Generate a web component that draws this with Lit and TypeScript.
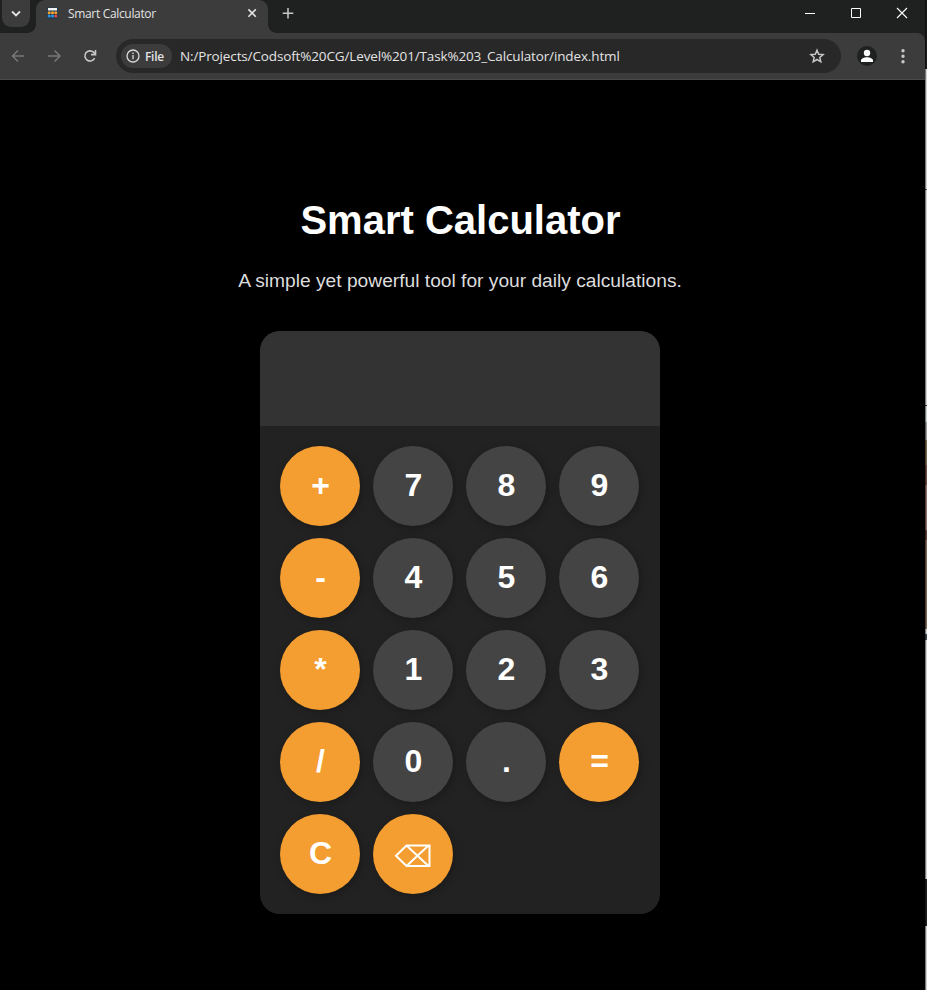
import { LitElement, html, css, svg } from "lit";
import { customElement } from "lit/decorators.js";

const KEYS = ["+", "7", "8", "9", "-", "4", "5", "6", "*", "1", "2", "3", "/", "0", ".", "=", "C", "⌫"];

@customElement("browser-chrome")
class BrowserChrome extends LitElement {
  static styles = css`
    :host { display: block; font-family: "Open Sans", "Noto Sans", sans-serif; color: #e3e3e3; }
    svg { display: block; flex: none; fill: none; }
    .tabs { height: 33px; display: flex; background: #1f2120; box-sizing: border-box; padding-left: 2px; }
    .search { width: 28px; height: 27px; border-radius: 0 0 9px 9px; background: #3c3c3c; display: flex; }
    .tab { position: relative; margin-left: 6px; width: 232px; height: 33px; background: #3c3c3c; border-radius: 9px 9px 0 0; display: flex; box-sizing: border-box; padding-left: 11px; }
    .tab::before, .tab::after { content: ""; position: absolute; bottom: 0; width: 8px; height: 8px; }
    .tab::before { left: -8px; background: radial-gradient(circle at 0 0, transparent 7.5px, #3c3c3c 8px); }
    .tab::after { right: -8px; background: radial-gradient(circle at 100% 0, transparent 7.5px, #3c3c3c 8px); }
    .name { font-size: 12px; line-height: 28px; margin-left: 10px; width: 178px; white-space: nowrap; letter-spacing: -0.33px; }
    .plus { margin-left: 13px; }
    .win { margin-left: auto; display: flex; }
    .bar { height: 47px; background: #3c3c3c; display: flex; align-items: center; box-sizing: border-box; border-bottom: 1px solid #4a4a4a; border-top-right-radius: 8px; }
    .top { background: #1f2120; }
    .nav { display: flex; width: 116px; }
    .omni { width: 725px; height: 34px; border-radius: 17px; background: #282828; display: flex; align-items: center; box-sizing: border-box; padding-left: 5px; }
    .chip { width: 51px; height: 24px; border-radius: 12px; background: #3c3c3c; display: flex; align-items: center; font-size: 12px; font-weight: 600; }
    .chip span { margin-left: 5px; letter-spacing: -0.3px; }
    .url { margin-left: 8px; font-size: 13.5px; line-height: 20px; width: 620px; white-space: nowrap; letter-spacing: -0.138px; }
  `;
  render() {
    return html`
      <div class="tabs">
        <div class="search"><svg width="28" height="27"><path d="M10 11.5l4 4 4-4" stroke="#e3e3e3" stroke-width="1.8" /></svg></div>
        <div class="tab">
          <svg width="11" height="27">
            <rect y="7.500" width="11" height="11.500" rx="1" fill="#213a50" />
            <rect x="1" y="8" width="9" height="2.5" fill="#f2f2f2" />
            ${[2.2, 5.5, 8.8].map((x, i) => svg`<circle cx=${x} cy="12.800" r="1.550" fill="#f5a02a" /><circle cx=${x} cy="16" r="1.550" fill=${i === 2 ? "#ee4a3c" : "#3293dc"} />`)}
          </svg>
          <div class="name">Smart Calculator</div>
          <svg width="14" height="27"><path d="M2.200 9.400l7.400 7.400M9.600 9.400l-7.400 7.400" transform="translate(.2 0)" stroke="#e3e3e3" stroke-width="1.6" /></svg>
        </div>
        <svg class="plus" width="16" height="27"><path d="M7 8v10.500M1.700 13.200h10.600" stroke="#c7c7c7" stroke-width="1.500" /></svg>
        <div class="win">
          <svg width="46" height="27"><path d="M12 13.500h10" stroke="#fff" /></svg>
          <svg width="46" height="27"><path d="M12.500 8.500h9v9h-9z" stroke="#fff" /></svg>
          <svg width="40" height="27"><path d="M12 8l10 10M22 8l-10 10" stroke="#fff" stroke-width="1.100" /></svg>
        </div>
      </div>
      <div class="top"><div class="bar">
        <div class="nav">
          <svg width="36" height="24"><path d="M24 12H13M18 6.500L12.500 12l5.500 5.500" stroke="#777" stroke-width="1.500" /></svg>
          <svg width="36" height="24"><path d="M12 12h11.500M18.500 6.500L24 12l-5.500 5.500" stroke="#777" stroke-width="1.500" /></svg>
          <svg width="36" height="24"><path d="M22.600 14.200A5.100 5.100 0 1 1 21.500 8.200L23.200 10M23.500 6v4.600H19" stroke="#c7c7c7" stroke-width="1.600" /></svg>
        </div>
        <div class="omni">
          <div class="chip">
            <svg width="19" height="24"><circle cx="12" cy="12" r="6" stroke="#dadada" stroke-width="1.300" /><path d="M12 11v4.200M12 8.500v1.400" stroke="#dadada" stroke-width="1.300" /></svg>
            <span>File</span>
          </div>
          <div class="url">N:/Projects/Codsoft%20CG/Level%201/Task%203_Calculator/index.html</div>
          <svg width="34" height="24"><path d="M17 6.200l1.700 4 4.400.4-3.300 2.900 1 4.300-3.800-2.300-3.800 2.300 1-4.300-3.300-2.900 4.400-.4z" stroke="#c7c7c7" stroke-width="1.500" /></svg>
        </div>
        <svg width="52" height="24"><circle cx="26" cy="12" r="10" fill="#1f2120" /><circle cx="26" cy="9" r="3.200" fill="#fff" /><path d="M20 18v-1.500c0-2 3-3.300 6-3.300s6 1.300 6 3.300V18z" fill="#fff" /></svg>
        <svg width="20" height="24"><path d="M10 6.700h.01M10 12.200h.01M10 17.700h.01" stroke="#c7c7c7" stroke-width="3.400" stroke-linecap="round" /></svg>
      </div></div>`;
  }
}

@customElement("app-root")
class AppRoot extends LitElement {
  static styles = css`
    :host { display: flex; height: 990px; background: #000; font-family: "Liberation Sans", Arial, sans-serif; color: #fff; overflow: hidden; }
    .window { width: 925px; flex: none; }
    .edge { width: 2px; flex: none; background: linear-gradient(90deg, rgba(0,0,0,.42) 50%, transparent 50%),
      linear-gradient(#1b1b1b 0 69px, #d2d2d2 69px 189px, #555 189px 190px, #d2d2d2 190px 405px, #333 405px 406px, #c8d0d0 406px 422px, #999 422px 440px, #7b6852 440px 465px, #6a4b40 465px 485px, #8c7165 485px 530px, #5d4135 530px 540px, #806857 540px 629px, #d2d2d2 629px 634px, #444a55 634px 640px, #d2d2d2 640px 879px, #1e1e1e 879px 926px, #d0d0d2 926px); }
    main { width: 920px; display: flex; flex-direction: column; align-items: center; padding-top: 117px; }
    h1 { margin: 0 0 0 1px; font-size: 40px; line-height: 46px; }
    p { margin: 27px 0 0; font-size: 19.2px; line-height: 22px; color: #ddd; }
    .calc { margin-top: 39px; width: 400px; height: 583px; border-radius: 20px; overflow: hidden; background: #222; }
    .display { height: 95px; background: #333; }
    .keys { padding: 20px; display: grid; grid-template-columns: repeat(4, 81px); gap: 12px; }
    button { width: 80px; height: 80px; padding: 0 0 1px 1px; border: 0; border-radius: 50%; background: #444; color: #fff; font: bold 32px "Liberation Sans", Arial, "DejaVu Sans", sans-serif; box-shadow: 2px 2px 8px rgba(0,0,0,.25); display: flex; align-items: center; justify-content: center; }
    .op { background: #f49d30; }
    svg { display: block; margin: 1px 2px 0 0; }
  `;
  render() {
    return html`
      <div class="window">
        <browser-chrome></browser-chrome>
        <main>
          <h1>Smart Calculator</h1>
          <p>A simple yet powerful tool for your daily calculations.</p>
          <div class="calc">
            <div class="display"></div>
            <div class="keys">
              ${KEYS.map((k) => html`<button class=${/[0-9.]/.test(k) ? "" : "op"}>${k === "⌫"
                ? html`<svg width="38" height="26" viewBox="0 0 38 26" role="img" aria-label="Backspace"><path d="M2 14.800L12.500 4.500H35.500V25H12.500zM12.500 4.500L34.500 25M34.500 4.500L12.500 25" fill="none" stroke="#fff" stroke-width="2" /></svg>`
                : k}</button>`)}
            </div>
          </div>
        </main>
      </div>
      <div class="edge"></div>`;
  }
}
